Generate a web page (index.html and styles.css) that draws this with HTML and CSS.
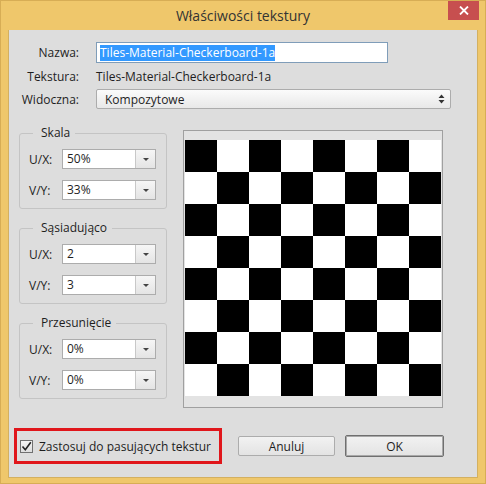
FILE: index.html
```html
<!DOCTYPE html>
<html lang="pl">
<head>
    <meta charset="UTF-8">
    <title>Właściwości tekstury</title>
    <link rel="stylesheet" href="styles.css">
</head>
<body>
    <div class="window">
        <!-- pasek tytułu -->
        <div class="titlebar">
            <h1 class="title">Właściwości tekstury</h1>
            <button class="close-btn" title="Zamknij">
                <svg width="10" height="9" viewBox="0 0 10 9"><path d="M1 0.5L9 8.5M9 0.5L1 8.5" stroke="#fff" stroke-width="1.8"/></svg>
            </button>
        </div>

        <div class="client">
            <!-- nazwa, tekstura, widoczność -->
            <div class="fields">
                <span class="lbl">Nazwa:</span>
                <div class="textbox"><span class="selected">Tiles-Material-Checkerboard-1a</span></div>
                <span class="lbl">Tekstura:</span>
                <span class="value">Tiles-Material-Checkerboard-1a</span>
                <span class="lbl">Widoczna:</span>
                <div class="select">
                    <span>Kompozytowe</span>
                    <svg width="7" height="10" viewBox="0 0 7 10"><path d="M3.5 0.5L6.5 4H0.5Z M3.5 9.5L6.5 6H0.5Z" fill="#333"/></svg>
                </div>
            </div>

            <div class="main">
                <div class="groups">
                    <fieldset class="group">
                        <legend>Skala</legend>
                        <div class="group-grid">
                            <span>U/X:</span>
                            <div class="combo"><span class="combo-val">50%</span><span class="drop"></span></div>
                            <span>V/Y:</span>
                            <div class="combo"><span class="combo-val">33%</span><span class="drop"></span></div>
                        </div>
                    </fieldset>
                    <fieldset class="group">
                        <legend>Sąsiadująco</legend>
                        <div class="group-grid">
                            <span>U/X:</span>
                            <div class="combo"><span class="combo-val">2</span><span class="drop"></span></div>
                            <span>V/Y:</span>
                            <div class="combo"><span class="combo-val">3</span><span class="drop"></span></div>
                        </div>
                    </fieldset>
                    <fieldset class="group">
                        <legend>Przesunięcie</legend>
                        <div class="group-grid">
                            <span>U/X:</span>
                            <div class="combo"><span class="combo-val">0%</span><span class="drop"></span></div>
                            <span>V/Y:</span>
                            <div class="combo"><span class="combo-val">0%</span><span class="drop"></span></div>
                        </div>
                    </fieldset>
                </div>

                <!-- podgląd tekstury -->
                <div class="preview">
                    <div class="checker"></div>
                </div>
            </div>

            <div class="bottom">
                <label class="apply">
                    <span class="checkbox">
                        <svg width="11" height="11" viewBox="0 0 11 11"><path d="M1.5 5.5L4.3 8.8L9.8 1.2" fill="none" stroke="#222" stroke-width="1.6"/></svg>
                    </span>
                    Zastosuj do pasujących tekstur
                </label>
                <button class="btn">Anuluj</button>
                <button class="btn btn-default">OK</button>
            </div>
        </div>
    </div>
</body>
</html>
```

FILE: styles.css
```css
/* podstawowe ustawienia */
body {
    margin: 0;
    padding: 0;
    font-family: 'Open Sans', 'Noto Sans', sans-serif;
    font-size: 12px;
    color: #1e1e1e;
    background: #fff;
}

/* okno dialogowe */
.window {
    width: 486px;
    height: 484px;
    box-sizing: border-box;
    background-color: #efc76b;
    border: 1px solid #d7ad55;
    display: flex;
    flex-direction: column;
}

.titlebar {
    height: 29px;
    display: grid;
    grid-template-columns: 1fr auto 1fr;
    align-items: start;
}

.title {
    grid-column: 2;
    margin: 6px 0 0;
    font-size: 14px;
    font-weight: normal;
    color: #333;
    line-height: 17px;
}

.close-btn {
    grid-column: 3;
    justify-self: end;
    width: 31px;
    height: 19px;
    margin-right: 6px;
    border: none;
    padding: 0;
    background-color: #c74f4f;
    display: flex;
    align-items: center;
    justify-content: center;
}

/* obszar roboczy */
.client {
    margin: 0 7px;
    height: 447px;
    background-color: #dddddd;
    border: 1px solid #d3b061;
    border-width: 0 1px 1px 1px;
    display: flex;
    flex-direction: column;
}

.fields {
    display: grid;
    grid-template-columns: 70px 355px;
    grid-template-rows: 21px 24px 20px;
    column-gap: 17px;
    row-gap: 1px;
    align-items: center;
    padding-top: 12px;
}

.lbl {
    text-align: right;
}

.textbox {
    width: 292px;
    height: 21px;
    box-sizing: border-box;
    border: 1px solid #7f9db9;
    background-color: #fff;
    padding: 1px 3px;
    display: flex;
    align-items: center;
}

.selected {
    background-color: #3399ff;
    color: #fff;
    line-height: 16px;
}

.select {
    height: 20px;
    box-sizing: border-box;
    border: 1px solid #acacac;
    border-radius: 2px;
    background: linear-gradient(#fbfbfb, #e8e8e8);
    padding: 0 5px 0 8px;
    display: flex;
    align-items: center;
    justify-content: space-between;
}

/* grupy ustawień */
.main {
    display: flex;
    margin-top: 16px;
    margin-left: 10px;
    gap: 16px;
}

.groups {
    width: 148px;
    display: flex;
    flex-direction: column;
    gap: 11px;
}

.group {
    margin: 0;
    padding: 8px 10px 8px 9px;
    border: 1px solid #c4c4c4;
    border-radius: 3px;
}

.group legend {
    padding: 0 5px 0 8px;
    margin-left: 4px;
    line-height: 16px;
}

.group-grid {
    display: grid;
    grid-template-columns: 33px 94px;
    grid-template-rows: 20px 20px;
    row-gap: 11px;
    align-items: center;
}

.combo {
    height: 20px;
    box-sizing: border-box;
    border: 1px solid #acacac;
    background-color: #fff;
    display: flex;
}

.combo-val {
    flex: 1;
    padding-left: 4px;
    line-height: 18px;
}

.drop {
    width: 19px;
    border-left: 1px solid #c8c8c8;
    background: linear-gradient(#f6f6f6, #e4e4e4) ;
    position: relative;
}

.drop::after {
    content: "";
    position: absolute;
    left: 7px;
    top: 8px;
    border-left: 3px solid transparent;
    border-right: 3px solid transparent;
    border-top: 3px solid #444;
}

/* podgląd */
.preview {
    width: 260px;
    height: 278px;
    box-sizing: border-box;
    margin-top: 5px;
    border: 1px solid #a0a0a0;
    background-color: #e3e3e3;
    padding: 9px 1px 0 1px;
}

.checker {
    width: 256px;
    height: 256px;
    background: repeating-conic-gradient(#fff 0 25%, #000 0 50%) 0 0 / 64px 64px;
}

/* dolny pasek */
.bottom {
    display: flex;
    align-items: center;
    margin-top: 20px;
    margin-left: 5px;
}

.apply {
    width: 208px;
    height: 36px;
    box-sizing: border-box;
    border: 3px solid #e0161b;
    padding-left: 3px;
    display: flex;
    align-items: center;
    gap: 6px;
    white-space: nowrap;
}

.checkbox {
    width: 13px;
    height: 13px;
    box-sizing: border-box;
    border: 1px solid #707070;
    background: linear-gradient(#f4f4f4, #dedede);
    display: flex;
    align-items: center;
    justify-content: center;
}

.btn {
    font-family: inherit;
    font-size: 12px;
    color: #1e1e1e;
    width: 97px;
    height: 20px;
    margin-left: 16px;
    padding: 0;
    border: 1px solid #acacac;
    border-radius: 2px;
    background: linear-gradient(#f2f2f2, #e3e3e3);
}

.btn-default {
    width: 99px;
    height: 22px;
    margin-left: 10px;
    border-color: #6f6f6f;
    box-shadow: inset 0 0 0 1px #a8a8a8;
}
```
